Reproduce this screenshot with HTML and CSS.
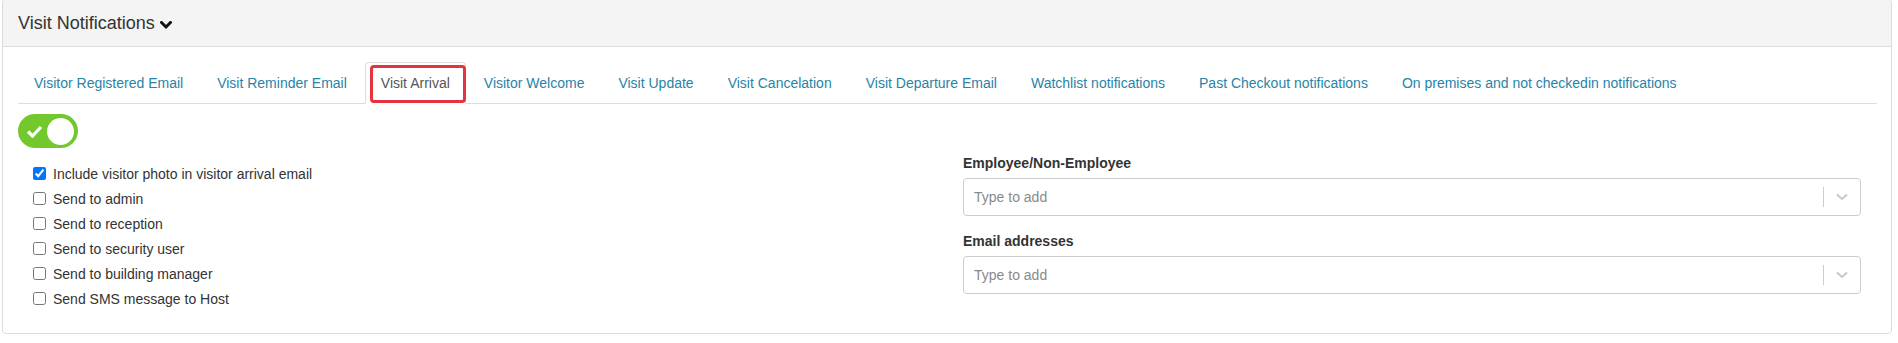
FILE: index.html
```html
<!DOCTYPE html>
<html>
<head>
<meta charset="utf-8">
<link rel="stylesheet" href="styles.css">
</head>
<body>
<div class="page">
  <div class="card">
    <div class="card-header">
      <span class="title">Visit Notifications</span>
      <svg class="chev" width="12" height="9" viewBox="0 0 12 9"><polyline points="1.5,1.5 6,6 10.5,1.5" fill="none" stroke="#111" stroke-width="3" stroke-linecap="square"/></svg>
    </div>
    <div class="card-body">
      <ul class="tabs">
        <li class="tab"><a>Visitor Registered Email</a></li>
        <li class="tab"><a>Visit Reminder Email</a></li>
        <li class="tab active"><a>Visit Arrival</a><span class="highlight"></span></li>
        <li class="tab"><a>Visitor Welcome</a></li>
        <li class="tab"><a>Visit Update</a></li>
        <li class="tab"><a>Visit Cancelation</a></li>
        <li class="tab"><a>Visit Departure Email</a></li>
        <li class="tab"><a>Watchlist notifications</a></li>
        <li class="tab"><a>Past Checkout notifications</a></li>
        <li class="tab"><a>On premises and not checkedin notifications</a></li>
      </ul>
      <div class="toggle">
        <svg class="toggle-check" width="17" height="13" viewBox="0 0 17 13"><polyline points="2,6.5 6.5,11 15,2" fill="none" stroke="#fff" stroke-width="3.2"/></svg>
        <span class="knob"></span>
      </div>
      <div class="row">
        <div class="col left">
          <label class="check"><input type="checkbox" checked><span>Include visitor photo in visitor arrival email</span></label>
          <label class="check"><input type="checkbox"><span>Send to admin</span></label>
          <label class="check"><input type="checkbox"><span>Send to reception</span></label>
          <label class="check"><input type="checkbox"><span>Send to security user</span></label>
          <label class="check"><input type="checkbox"><span>Send to building manager</span></label>
          <label class="check"><input type="checkbox"><span>Send SMS message to Host</span></label>
        </div>
        <div class="col right">
          <div class="field">
            <div class="field-label">Employee/Non-Employee</div>
            <div class="select">
              <span class="placeholder">Type to add</span>
              <span class="sep"></span>
              <svg class="arrow" width="12" height="8" viewBox="0 0 12 8"><polyline points="1,1.5 6,6 11,1.5" fill="none" stroke="#c8c8c8" stroke-width="2"/></svg>
            </div>
          </div>
          <div class="field">
            <div class="field-label">Email addresses</div>
            <div class="select">
              <span class="placeholder">Type to add</span>
              <span class="sep"></span>
              <svg class="arrow" width="12" height="8" viewBox="0 0 12 8"><polyline points="1,1.5 6,6 11,1.5" fill="none" stroke="#c8c8c8" stroke-width="2"/></svg>
            </div>
          </div>
        </div>
      </div>
    </div>
  </div>
</div>
</body>
</html>
```

FILE: styles.css
```css
* { box-sizing: border-box; }
html, body { margin: 0; padding: 0; background: #fff; }
body {
  font-family: "Liberation Sans", Arial, sans-serif;
  font-size: 14px;
  line-height: 20px;
  color: #333;
}
.page { padding: 0 6px 0 2px; }
.card {
  margin-top: -1px;
  border: 1px solid #dcdcdc;
  border-radius: 4px;
  background: #fff;
}
.card-header {
  display: flex;
  align-items: center;
  height: 47px;
  padding: 0 15px;
  background: #f4f4f4;
  border-bottom: 1px solid #dedede;
  border-radius: 4px 4px 0 0;
}
.title { font-size: 18px; color: #333; }
.chev { margin-left: 5px; margin-top: 4px; }
.card-body { padding: 15px 14px 16px 15px; }
.tabs {
  display: flex;
  list-style: none;
  margin: 0;
  padding: 0;
  border-bottom: 1px solid #dddddd;
}
.tab {
  position: relative;
  margin-right: 2px;
  margin-bottom: -1px;
  border: 1px solid transparent;
  border-radius: 4px 4px 0 0;
}
.tab a {
  display: block;
  padding: 10px 15px 10px 15px;
  color: #2784a8;
  white-space: nowrap;
}
.tab.active {
  border-color: #dddddd;
  border-bottom-color: #fff;
  background: #fff;
}
.tab.active a { color: #555; }
.highlight {
  position: absolute;
  left: 4px;
  top: 2px;
  right: -1px;
  bottom: 0;
  border: 3px solid #e5343f;
  border-radius: 4px;
}
.toggle {
  position: relative;
  display: flex;
  align-items: center;
  justify-content: space-between;
  width: 60px;
  height: 34px;
  margin-top: 10px;
  padding: 0 4px 0 8px;
  border-radius: 17px;
  background: #72c82c;
}
.knob {
  width: 27px;
  height: 27px;
  border-radius: 50%;
  background: #fff;
}
.row {
  display: flex;
  margin: 5px 0 0 -15px;
}
.col { flex: 1 1 50%; padding: 0 15px; }
.left { padding-top: 8px; padding-left: 30px; padding-bottom: 6px; }
.right { padding-right: 16px; padding-left: 23px; }
.check {
  display: flex;
  align-items: center;
  height: 25px;
}
.check input {
  width: 13px;
  height: 13px;
  margin: 0 7px 0 0;
  accent-color: #0075ff;
}
.field { margin-bottom: 15px; }
.field:last-child { margin-bottom: 0; }
.field-label {
  font-weight: bold;
  margin-bottom: 5px;
}
.select {
  display: flex;
  align-items: center;
  height: 38px;
  border: 1px solid #cccccc;
  border-radius: 4px;
  padding: 0 12px 0 10px;
}
.placeholder { flex: 1; color: #8a8a8a; }
.sep {
  width: 1px;
  height: 20px;
  background: #cccccc;
  margin-right: 12px;
}
.arrow { display: block; }
```
